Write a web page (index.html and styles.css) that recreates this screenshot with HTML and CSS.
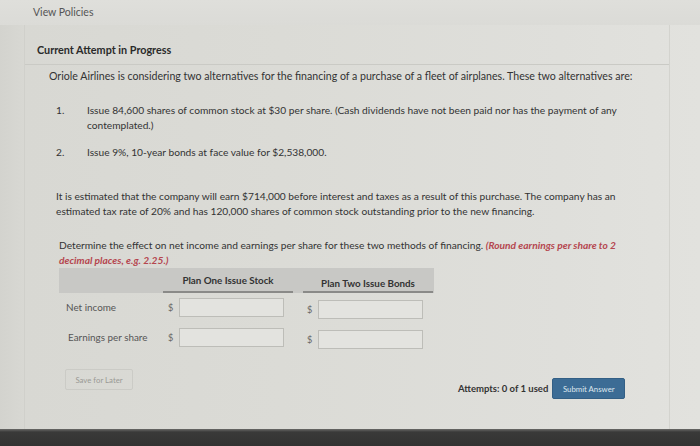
FILE: index.html
```html
<!DOCTYPE html>
<html>
<head>
<meta charset="utf-8">
<link rel="stylesheet" href="styles.css">
</head>
<body>
<div class="screen">
  <div class="topbar"><span class="policies">View Policies</span></div>
  <div class="main">
    <div class="heading">Current Attempt in Progress</div>
    <div class="content">
      <p class="intro">Oriole Airlines is considering two alternatives for the financing of a purchase of a fleet of airplanes. These two alternatives are:</p>
      <ol class="alts">
        <li class="alt first"><span class="num">1.</span><span class="alt-text">Issue 84,600 shares of common stock at $30 per share. (Cash dividends have not been paid nor has the payment of any contemplated.)</span></li>
        <li class="alt"><span class="num">2.</span><span class="alt-text">Issue 9%, 10-year bonds at face value for $2,538,000.</span></li>
      </ol>
      <p class="para">It is estimated that the company will earn $714,000 before interest and taxes as a result of this purchase. The company has an estimated tax rate of 20% and has 120,000 shares of common stock outstanding prior to the new financing.</p>
      <p class="determine">Determine the effect on net income and earnings per share for these two methods of financing. <em class="hint">(Round earnings per share to 2 decimal places, e.g. 2.25.)</em></p>
      <div class="table">
        <div class="thead">
          <div class="th-blank"></div>
          <div class="th th-one">Plan One Issue Stock</div>
          <div class="th th-two">Plan Two Issue Bonds</div>
        </div>
        <div class="row">
          <div class="label">Net income</div>
          <div class="cell"><span class="dollar">$</span><span class="input"></span></div>
          <div class="cell cell-two"><span class="dollar">$</span><span class="input"></span></div>
        </div>
        <div class="row">
          <div class="label">Earnings per share</div>
          <div class="cell"><span class="dollar">$</span><span class="input"></span></div>
          <div class="cell cell-two"><span class="dollar">$</span><span class="input"></span></div>
        </div>
      </div>
      <div class="footer">
        <button class="save">Save for Later</button>
        <div class="submit-group">
          <span class="attempts">Attempts: 0 of 1 used</span>
          <button class="submit">Submit Answer</button>
        </div>
      </div>
    </div>
  </div>
  <div class="bezel"></div>
</div>
</body>
</html>
```
FILE: styles.css
```css
* { box-sizing: border-box; }
html, body { margin: 0; padding: 0; }
body {
  width: 700px;
  height: 446px;
  overflow: hidden;
  font-family: Lato, "Open Sans", "Liberation Sans", sans-serif;
  color: #333;
}
.screen {
  width: 700px;
  height: 446px;
  display: flex;
  flex-direction: column;
  background: linear-gradient(to right, #d3d3ce 0, #d8d8d3 24px, #dbdbd6 40%, #dfdfdb 80%, #e2e2de 100%);
}
.topbar {
  height: 25px;
  padding-left: 33px;
  padding-top: 5px;
  font-size: 10.5px;
  line-height: 14px;
  background: linear-gradient(to bottom, #dfdfdb, #dbdbd7);
}
.policies {
  color: #555;
}
.main {
  flex: 1;
  margin-left: 24px;
  margin-right: 30px;
  border-left: 1px solid #d0d0cb;
  border-right: 1px solid #d3d3ce;
}
.heading {
  margin-top: 18px;
  padding-left: 12px;
  padding-bottom: 7px;
  font-size: 10.8px;
  line-height: 14px;
  font-weight: 700;
  color: #2a2a2a;
  border-bottom: 1px solid #cacac5;
}
.content {
  padding-left: 24px;
  font-size: 10.2px;
  line-height: 15px;
  color: #333;
}
.intro {
  margin: 4px 0 0 0;
  font-size: 10.6px;
}
.alts {
  list-style: none;
  margin: 19px 0 0 0;
  padding: 0 0 0 7px;
}
.alt {
  display: flex;
  margin-top: 12px;
}
.alt.first { margin-top: 0; }
.num {
  width: 31px;
  flex: none;
}
.alt-text {
  width: 540px;
}
.para {
  margin: 29px 0 0 7px;
  width: 565px;
}
.determine {
  margin: 19px 0 0 10px;
  width: 562px;
}
.hint {
  color: #b5464f;
  font-weight: 700;
  font-style: italic;
}
.table {
  margin: 0 0 0 10px;
  width: 375px;
}
.thead {
  display: grid;
  grid-template-columns: 104px 130px 140px;
  height: 25px;
  background: #c8c8c5;
}
.th {
  font-size: 9.8px;
  font-weight: 700;
  color: #333;
  text-align: center;
  padding-top: 5px;
  border-bottom: 2px solid #8a8a88;
}
.th-two { padding-top: 8px; margin-left: 10px; }
.row {
  display: grid;
  grid-template-columns: 104px 130px 140px;
  margin-top: 5px;
  height: 19px;
  align-items: center;
}
.row + .row { margin-top: 11px; }
.label {
  padding-left: 7px;
  font-size: 9.9px;
  color: #555;
}
.row + .row .label { padding-left: 9px; }
.cell {
  display: flex;
  align-items: center;
  padding-left: 5px;
}
.cell-two { padding-left: 14px; position: relative; top: 2px; }
.dollar {
  width: 11px;
  font-size: 9.2px;
  color: #666;
}
.input {
  display: block;
  width: 105px;
  height: 19px;
  background: #e3e3df;
  border: 1px solid #bdbdb8;
}
.footer {
  display: flex;
  align-items: flex-start;
  margin-top: 22px;
}
.save {
  margin-left: 16px;
  width: 68px;
  height: 21px;
  padding: 0;
  font-family: Lato, "Liberation Sans", sans-serif;
  font-size: 7.8px;
  color: #999995;
  background: transparent;
  border: 1px solid #cbcbc6;
  border-radius: 2px;
}
.submit-group {
  display: flex;
  align-items: center;
  margin-left: 325px;
  margin-top: 9px;
}
.attempts {
  font-size: 9.5px;
  font-weight: 700;
  color: #333;
  margin-right: 4px;
}
.submit {
  width: 73px;
  height: 21px;
  padding: 0;
  font-family: Lato, "Liberation Sans", sans-serif;
  font-size: 7.8px;
  color: #dfe7ee;
  background: #3c6c95;
  border: 1px solid #335f85;
  border-radius: 2px;
}
.bezel {
  height: 17px;
  background: linear-gradient(to bottom, #6a6a68 0, #3a3a39 3px, #333332 100%);
}
```
